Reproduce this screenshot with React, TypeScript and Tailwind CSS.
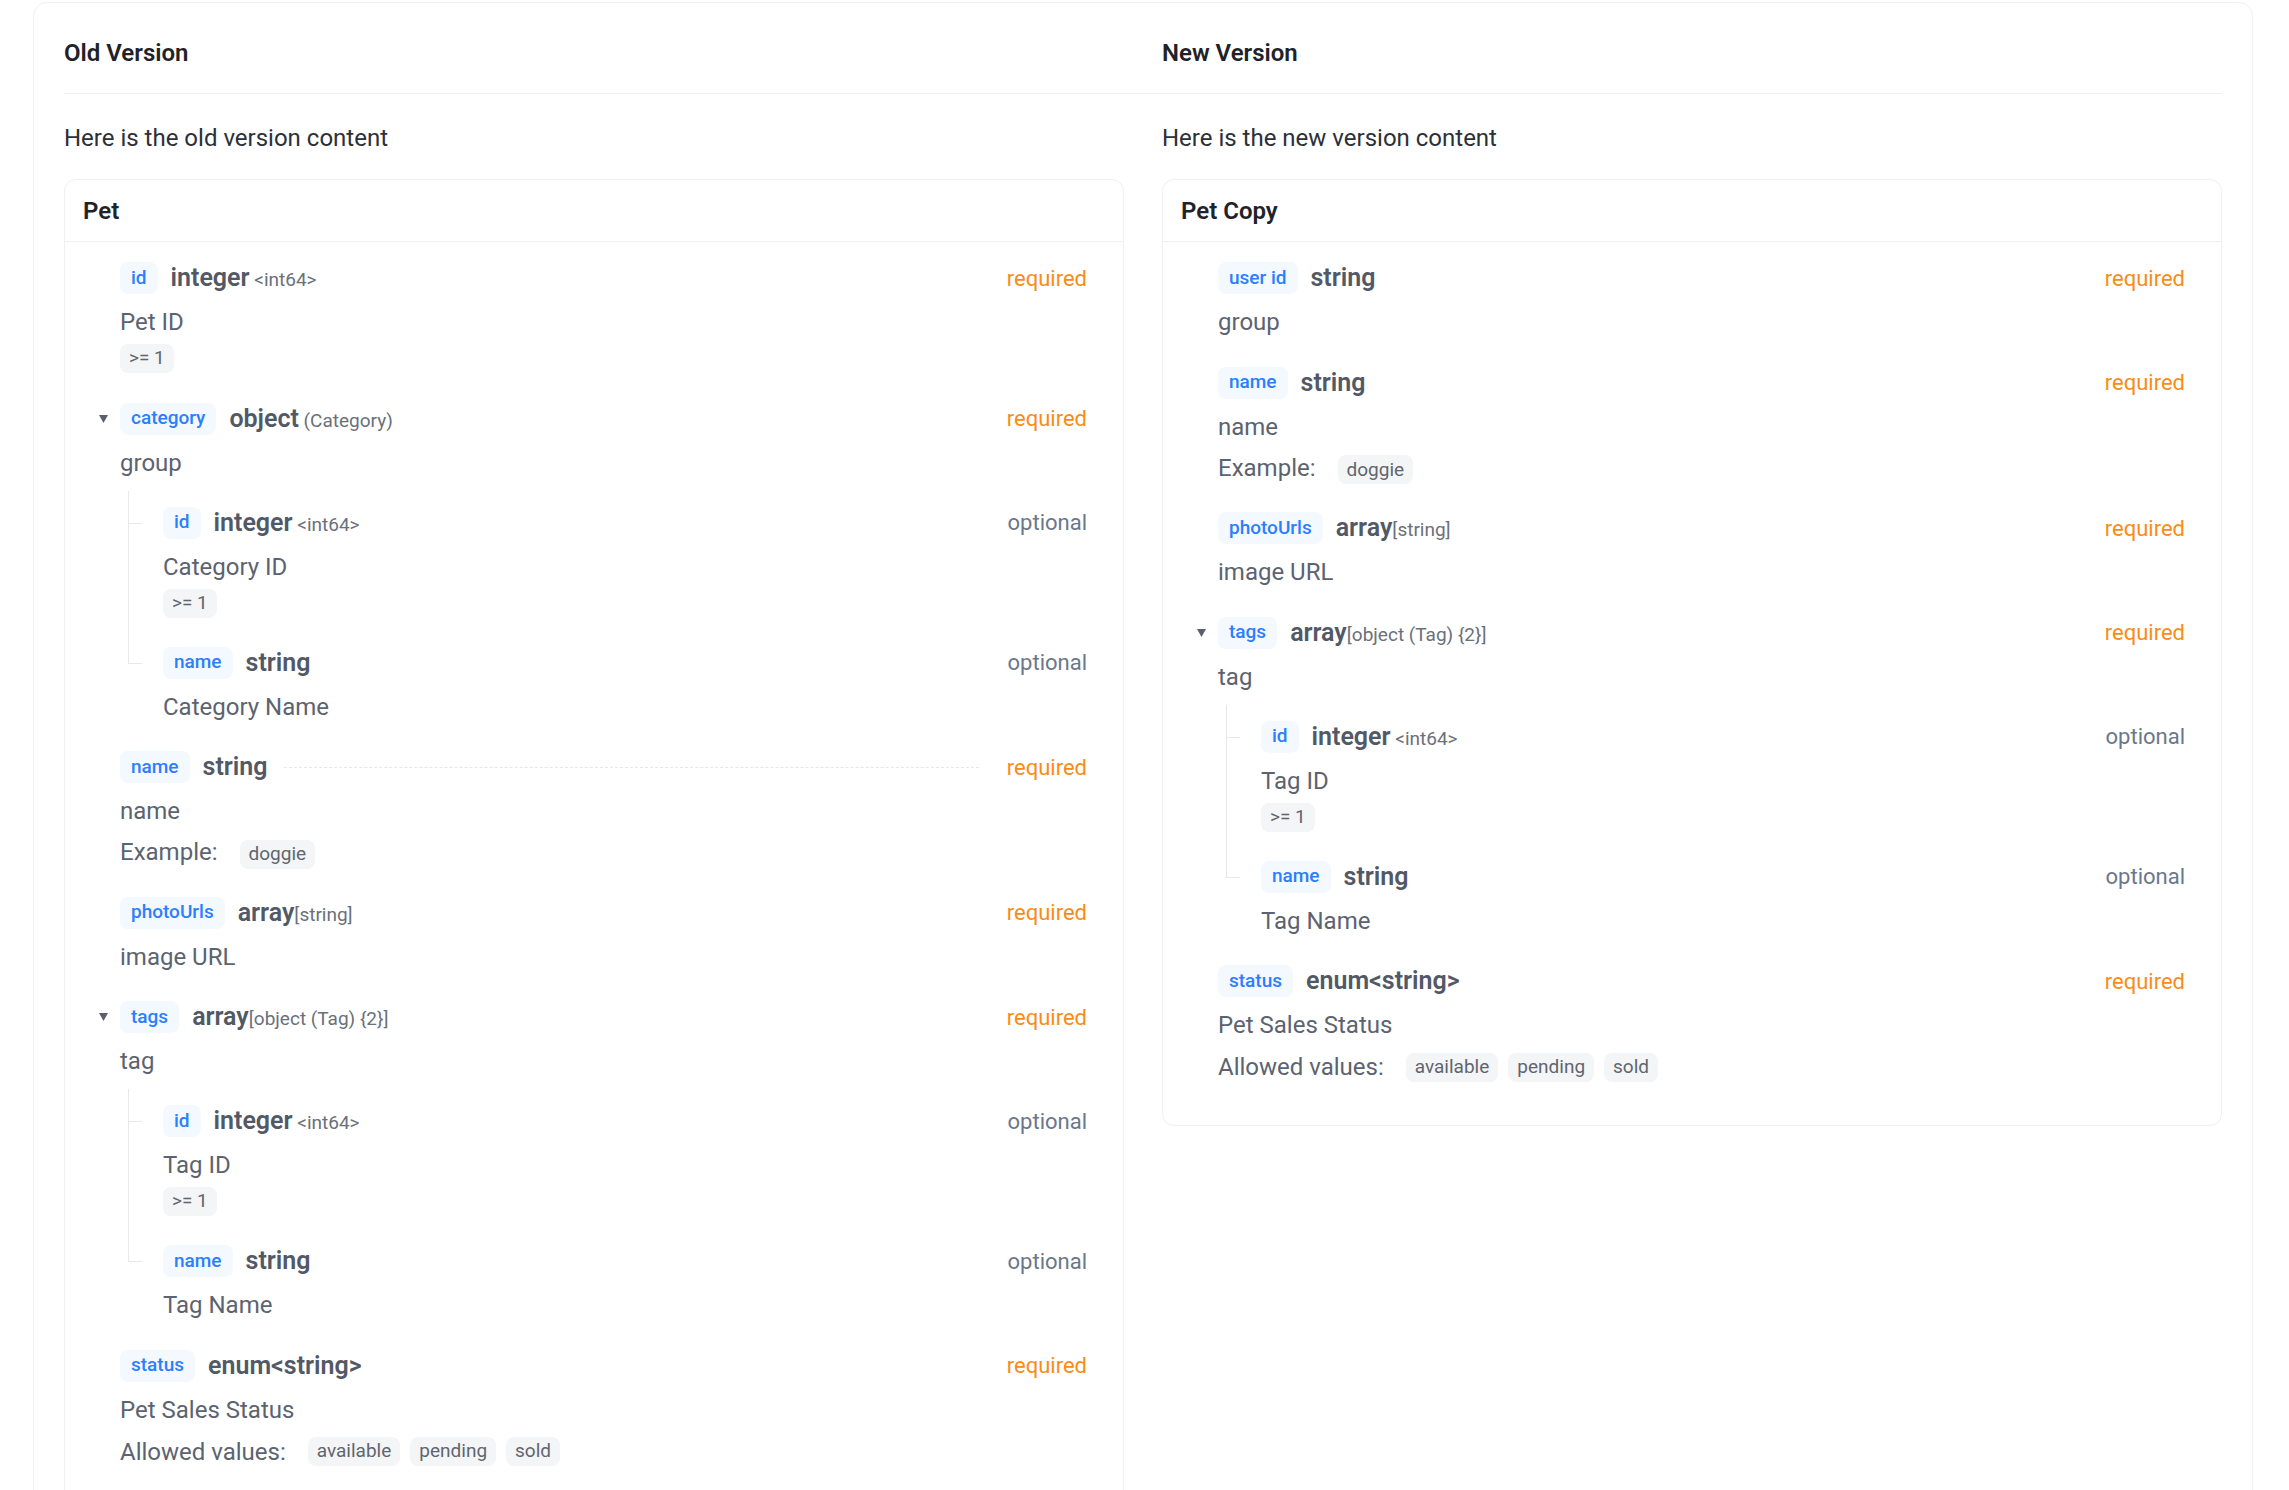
import type { ReactNode } from "react"

type Prop = {
  name: string
  type: string
  suffix?: string
  required?: boolean
  desc: string
  chip?: string
  example?: string
  enums?: string[]
  dashed?: boolean
  children?: Prop[]
}

const tagChildren: Prop[] = [
  { name: "id", type: "integer", suffix: " <int64>", desc: "Tag ID", chip: ">= 1" },
  { name: "name", type: "string", desc: "Tag Name" },
]

const oldProps: Prop[] = [
  { name: "id", type: "integer", suffix: " <int64>", required: true, desc: "Pet ID", chip: ">= 1" },
  {
    name: "category",
    type: "object",
    suffix: " (Category)",
    required: true,
    desc: "group",
    children: [
      { name: "id", type: "integer", suffix: " <int64>", desc: "Category ID", chip: ">= 1" },
      { name: "name", type: "string", desc: "Category Name" },
    ],
  },
  { name: "name", type: "string", required: true, desc: "name", example: "doggie", dashed: true },
  { name: "photoUrls", type: "array", suffix: "[string]", required: true, desc: "image URL" },
  { name: "tags", type: "array", suffix: "[object (Tag) {2}]", required: true, desc: "tag", children: tagChildren },
  { name: "status", type: "enum<string>", required: true, desc: "Pet Sales Status", enums: ["available", "pending", "sold"] },
]

const newProps: Prop[] = [
  { name: "user id", type: "string", required: true, desc: "group" },
  { name: "name", type: "string", required: true, desc: "name", example: "doggie" },
  { name: "photoUrls", type: "array", suffix: "[string]", required: true, desc: "image URL" },
  { name: "tags", type: "array", suffix: "[object (Tag) {2}]", required: true, desc: "tag", children: tagChildren },
  { name: "status", type: "enum<string>", required: true, desc: "Pet Sales Status", enums: ["available", "pending", "sold"] },
]

function cn(...parts: (string | false | undefined)[]) {
  return parts.filter(Boolean).join(" ")
}

function Chip({ children }: { children: ReactNode }) {
  return (
    <span className="inline-flex h-[29px] items-center rounded-[8px] bg-[#f4f5f6] px-[9px] text-[19px] text-[#60656e]">
      {children}
    </span>
  )
}

function Caret() {
  return (
    <svg viewBox="0 0 9 8" className="ml-[-21px] mr-[12px] h-[8px] w-[9px] shrink-0">
      <polygon points="0,0 9,0 4.5,8" fill="#5a5f68" />
    </svg>
  )
}

function PropBody({ p }: { p: Prop }) {
  return (
    <div>
      <div className="flex h-[32px] items-center">
        {p.children && <Caret />}
        <span className="flex h-[32px] items-center rounded-[8px] bg-[#f4f8ff] px-[11px] text-[19px] font-medium text-[#2b7fff]">
          {p.name}
        </span>
        <span className="ml-[13px] whitespace-pre text-[25px] font-semibold text-[#525966]">
          {p.type}
          {p.suffix && <span className="text-[19px] font-normal text-[#6b7079]">{p.suffix}</span>}
        </span>
        <span className={cn("flex-1", p.dashed && "ml-[17px] mr-[28px] border-t border-dashed border-[#e6e6e6]")} />
        <span className={cn("text-[22px]", p.required ? "text-[#fa8c16]" : "text-[#6b778a]")}>
          {p.required ? "required" : "optional"}
        </span>
      </div>
      <div className="mt-[13px] text-[24px] leading-[30px] text-[#5c6370]">{p.desc}</div>
      {p.chip && (
        <div className="mt-[7px] flex">
          <Chip>{p.chip}</Chip>
        </div>
      )}
      {p.example && (
        <div className="mt-[11px] flex h-[30px] items-center text-[24px] text-[#5c6370]">
          <span>Example:</span>
          <span className="ml-[22px]">
            <Chip>{p.example}</Chip>
          </span>
        </div>
      )}
      {p.enums && (
        <div className="mt-[12px] flex h-[30px] items-center text-[24px] text-[#5c6370]">
          <span>Allowed values:</span>
          <span className="ml-[22px] flex gap-[10px]">
            {p.enums.map((v) => (
              <Chip key={v}>{v}</Chip>
            ))}
          </span>
        </div>
      )}
      {p.children && (
        <div className="ml-[8px] mt-[13px]">
          {p.children.map((c, i) => {
            const last = i === p.children!.length - 1
            return (
              <div key={c.name} className={cn("relative pl-[35px]", i === 0 ? "pt-[16px]" : "pt-[29px]")}>
                <span
                  className={cn(
                    "absolute left-0 top-0 w-px bg-[#e8e8e8]",
                    last ? (i === 0 ? "h-[32px]" : "h-[45px]") : "bottom-0"
                  )}
                />
                <span className={cn("absolute left-0 h-px w-[14px] bg-[#e8e8e8]", i === 0 ? "top-[32px]" : "top-[45px]")} />
                <PropBody p={c} />
              </div>
            )
          })}
        </div>
      )}
    </div>
  )
}

function SchemaCard({ title, props }: { title: string; props: Prop[] }) {
  return (
    <div className="rounded-[12px] border border-[#f0f0f0] bg-white">
      <div className="border-b border-[#f0f0f0] px-[18px] pb-[14px] pt-[15px] text-[24px] font-semibold leading-[32px] text-[#1f2329]">
        {title}
      </div>
      <div className="flex flex-col gap-[29.5px] pb-[43px] pl-[55px] pr-[36px] pt-[20px]">
        {props.map((p) => (
          <PropBody key={p.name} p={p} />
        ))}
      </div>
    </div>
  )
}

export default function App() {
  return (
    <div className="min-h-screen bg-white pl-[33px] pt-[2px] font-['Segoe_UI',Roboto,'Noto_Sans',sans-serif]">
      <div className="w-[2220px] rounded-[14px] border border-[#f0f0f0] px-[30px] pb-[40px]">
        <div className="grid grid-cols-2 gap-[38px] border-b border-[#f0f0f0] pb-[24px] pt-[34px] text-[24px] font-semibold leading-[32px] text-[#1f2329]">
          <div>Old Version</div>
          <div>New Version</div>
        </div>
        <div className="grid grid-cols-2 items-start gap-[38px]">
          <div>
            <div className="mt-[28px] text-[24px] leading-[32px] text-[#2c3038]">Here is the old version content</div>
            <div className="mt-[25px]">
              <SchemaCard title="Pet" props={oldProps} />
            </div>
          </div>
          <div>
            <div className="mt-[28px] text-[24px] leading-[32px] text-[#2c3038]">Here is the new version content</div>
            <div className="mt-[25px]">
              <SchemaCard title="Pet Copy" props={newProps} />
            </div>
          </div>
        </div>
      </div>
    </div>
  )
}
